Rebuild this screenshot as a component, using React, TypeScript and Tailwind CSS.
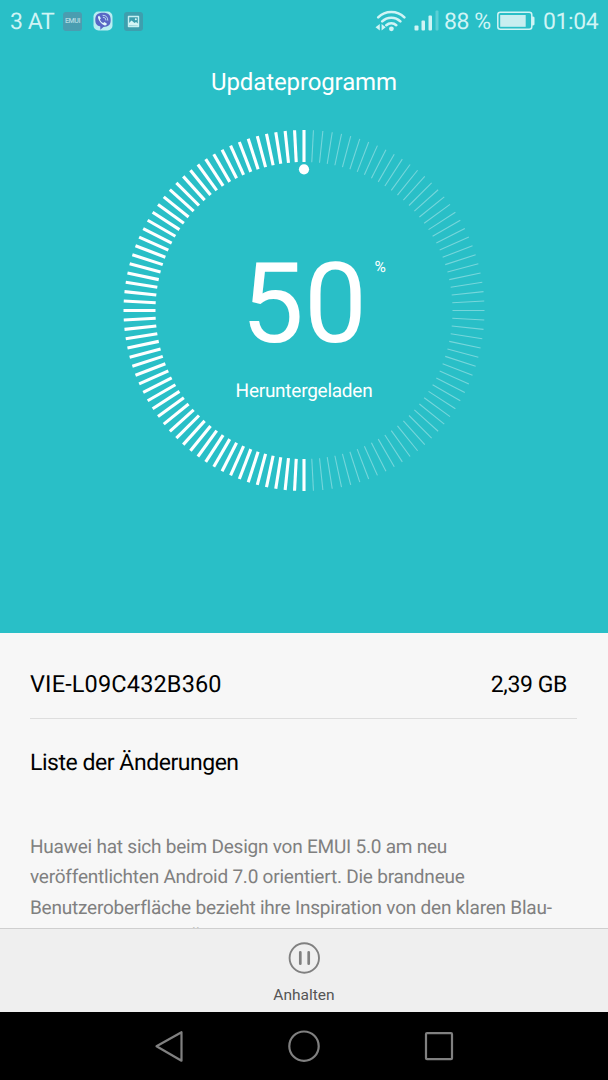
const TICKS = 120;
const PROGRESS = 50;

const changes = [
  "Huawei hat sich beim Design von EMUI 5.0 am neu",
  "veröffentlichten Android 7.0 orientiert. Die brandneue",
  "Benutzeroberfläche bezieht ihre Inspiration von den klaren Blau-",
  "und Weißtönen der Ägäis.",
];

function StatusBar() {
  return (
    <div className="flex h-[42px] items-center justify-between pl-[10px] pr-[10px] text-[23px] leading-none tracking-[-0.4px] text-[#d0f4f5]">
      <div className="flex items-center">
        <span className="w-[53px] whitespace-nowrap">3 AT</span>
        <div className="flex h-[19px] w-[19px] items-center justify-center rounded-[3px] bg-[#4a9db0]">
          <span className="text-[7px] font-medium tracking-[-0.4px] text-[#b5dce2]">EMUI</span>
        </div>
        <svg className="ml-[11px]" width="20" height="20" viewBox="0 0 20 20" fill="none">
          <rect x="0.5" y="0.5" width="19" height="19" rx="5" fill="#b9eef2" />
          <path d="M10 1.8c5.5 0 7.7 2 7.7 7.2s-2.4 6.8-7.2 6.9L7.3 18.8v-3.4C3.8 14.7 2.3 12.8 2.3 9c0-5.2 2.2-7.2 7.7-7.2z" fill="#5967c5" />
          <path d="M6.2 4.7l1.7 2.5-1 1.3c.7 1.8 1.7 2.8 3.3 3.6l1.3-1 2.4 1.7c-.3 1.4-1.3 2-2.7 1.5C8.2 12.9 6 10.3 5.1 7c-.3-1.2.2-2 1.1-2.3z" fill="#dff7fb" />
          <path d="M10 4.3c3 0 4.7 1.7 4.8 4.9M10.3 6.3c1.6.1 2.5 1 2.6 2.7" stroke="#c7e9f5" strokeWidth="0.9" strokeLinecap="round" />
        </svg>
        <svg className="ml-[11px]" width="19" height="19" viewBox="0 0 19 19" fill="none">
          <rect width="19" height="19" rx="3" fill="#3d9fae" />
          <path d="M4.5 4.5h10v10h-10z" stroke="#c5f0f2" strokeWidth="1.4" strokeLinejoin="round" />
          <path d="M5 13.5v-2.5l2.5-2.5 3 2.5 1.5-1 2.5 2v1.7z" fill="#d5f5f6" />
          <circle cx="11.8" cy="7.2" r="1" fill="#d5f5f6" />
        </svg>
      </div>
      <div className="flex items-center">
        <svg width="32" height="22" viewBox="0 0 32 22" fill="none" stroke="#d0f4f5" strokeWidth="2.6" strokeLinecap="round">
          <path d="M3.2 7.4a18.5 18.5 0 0 1 26.2 0" />
          <path d="M7.2 11.4a13 13 0 0 1 18.2 0" />
          <path d="M11.3 15.2a7.3 7.3 0 0 1 10 0" />
          <circle cx="16.4" cy="18.8" r="2.4" fill="#d0f4f5" stroke="none" />
          <path d="M4.8 14v6.5L.5 17.3zM6.6 14v6.5l4.1-3.2z" fill="#d0f4f5" stroke="none" />
        </svg>
        <svg className="ml-[7px]" width="25" height="22" viewBox="0 0 25 22" fill="#d0f4f5">
          <rect x="0.5" y="15.5" width="4" height="5" rx="1" />
          <rect x="7.5" y="10.5" width="3.5" height="10" rx="1" />
          <rect x="14.5" y="5.5" width="3.5" height="15" rx="1" />
          <rect x="21.5" y="0.5" width="3" height="20" rx="1" opacity="0.3" />
        </svg>
        <span className="ml-[5px] w-[46px] whitespace-nowrap">88 %</span>
        <svg className="ml-[7px]" width="38" height="20" viewBox="0 0 38 20" fill="none">
          <rect x="0.8" y="1.3" width="34" height="17" rx="2.5" stroke="#d0f4f5" strokeWidth="1.5" />
          <rect x="3.2" y="4" width="25.5" height="11.8" fill="#c8eef0" />
          <path d="M35 5.5h1c1 .2 1.5.7 1.5 1.5v6c0 .8-.5 1.3-1.5 1.5h-1z" fill="#d0f4f5" />
        </svg>
        <span className="ml-[8px] w-[55px] whitespace-nowrap">01:04</span>
      </div>
    </div>
  );
}

function Dial() {
  const ticks = Array.from({ length: TICKS }, (_, i) => i);
  const firstDone = TICKS - (TICKS * PROGRESS) / 100;

  return (
    <div className="relative mt-[7px] h-[364px] w-[364px]">
      <svg className="block" width="364" height="364" viewBox="-182 -181.5 364 364">
        {ticks.map((i) => {
          const done = i === 0 || i >= firstDone;
          return (
            <line
              key={i}
              x1="0"
              y1="-148.5"
              x2="0"
              y2="-180.5"
              stroke="#fff"
              strokeWidth={done ? 3.1 : 1.1}
              strokeOpacity={done ? 1 : 0.36}
              transform={`rotate(${(i * 360) / TICKS})`}
            />
          );
        })}
        <circle cx="0" cy="-141.2" r="5.1" fill="#fff" />
      </svg>
      <div className="absolute inset-0 flex flex-col items-center pt-[119px] text-white">
        <div className="relative text-[112px] leading-[114px]">
          {PROGRESS}
          <span className="absolute left-[133.5px] top-[10px] text-[15.5px] leading-[18px]">%</span>
        </div>
        <p className="mt-[17px] text-[19px] leading-6 tracking-[-0.25px]">Heruntergeladen</p>
      </div>
    </div>
  );
}

function NavBar() {
  return (
    <nav className="flex h-[68px] justify-center gap-[99px] bg-black pt-4">
      <svg width="36" height="36" viewBox="0 0 36 36" fill="none" stroke="#808080" strokeWidth="2.2" strokeLinejoin="round">
        <path d="M30.5 4.2v28.5L5.5 18.3z" />
      </svg>
      <svg width="36" height="36" viewBox="0 0 36 36" fill="none" stroke="#808080" strokeWidth="2.2">
        <circle cx="18" cy="18.2" r="14.7" />
      </svg>
      <svg width="36" height="36" viewBox="0 0 36 36" fill="none" stroke="#808080" strokeWidth="2.2">
        <rect x="5" y="5.2" width="26" height="26" rx="1" />
      </svg>
    </nav>
  );
}

function App() {
  return (
    <div className="flex h-[1080px] w-[608px] flex-col overflow-hidden bg-[#f7f7f7] font-[Roboto,sans-serif] [text-rendering:geometricPrecision]">
      <header className="h-[632.5px] shrink-0 bg-[#29bfc7]">
        <StatusBar />
        <div className="flex flex-col items-center">
          <h1 className="mt-[20px] h-[60px] text-[24px] leading-10 tracking-[-0.12px] text-white">Updateprogramm</h1>
          <Dial />
        </div>
      </header>

      <main className="min-h-0 flex-1 overflow-hidden pl-[30px] pr-[31px]">
        <div className="flex h-[86px] items-center justify-between border-b border-[#dedede] pr-[10px] pt-[20px] text-[23px] text-black">
          <span className="text-[23.5px] tracking-[0.15px]">VIE-L09C432B360</span>
          <span className="tracking-[-0.4px]">2,39 GB</span>
        </div>
        <h2 className="mt-[28px] text-[23px] leading-8 tracking-[-0.46px] text-black">Liste der Änderungen</h2>
        <div className="mt-[53px] text-[19px] leading-[30.5px] tracking-[-0.22px] text-[#808080] [font-variant-ligatures:common-ligatures]">
          {changes.map((line) => (
            <p key={line} className="whitespace-nowrap">{line}</p>
          ))}
        </div>
      </main>

      <button className="flex h-[84px] shrink-0 flex-col items-center border-t border-[#cfcfcf] bg-[#efefef] pt-[13px] text-[#555]">
        <svg width="32" height="32" viewBox="0 0 32 32" fill="none" stroke="#808080" strokeLinecap="round">
          <circle cx="16.3" cy="16" r="14.7" strokeWidth="1.9" />
          <path d="M12.3 10.3v11.4M20.7 10.3v11.4" strokeWidth="2.7" />
        </svg>
        <span className="mt-[11px] text-[15.5px] leading-5">Anhalten</span>
      </button>

      <NavBar />
    </div>
  );
}

export default App;
